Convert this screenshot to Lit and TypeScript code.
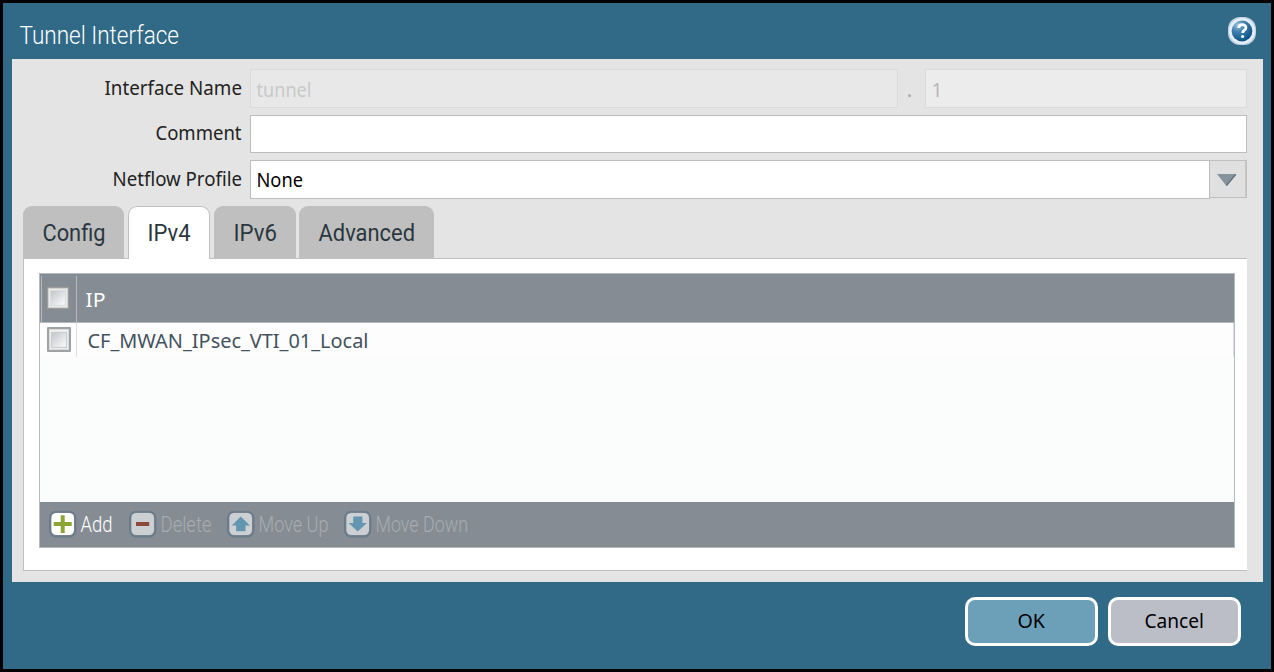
import { LitElement, html, css, svg } from "lit";
import { customElement, property } from "lit/decorators.js";

/** A single line of text fitted to a fixed measure. */
@customElement("fit-text")
class FitText extends LitElement {
  @property() text = "";
  @property({ type: Number }) width = 10;
  @property({ type: Number }) size = 20.5;
  static styles = css`
    :host { display: block; flex: none; height: 30px; }
    svg { display: block; overflow: visible; }
    text { fill: currentColor; }
  `;
  render() {
    return html`<svg width=${this.width} height="30">
      <text x="-0.5" y="22" font-size=${this.size} textLength=${this.width} lengthAdjust="spacingAndGlyphs">${this.text}</text>
    </svg>`;
  }
}

const t = (text: string, width: number, size = 20.8) =>
  html`<fit-text .text=${text} .width=${width} .size=${size}></fit-text>`;

const glyphs: Record<string, unknown> = {
  add: svg`<path d="M11.7 4.2h4v6.9h7v3.9h-7v6.9h-4V15h-7v-3.9h7z" fill="#8ea534"/>`,
  delete: svg`<path d="M7 11h13.2v4H7z" fill="#8a4a3b"/>`,
  up: svg`<path d="M13.7 5.6l9.2 8.8h-4.4v5.9h-9.4v-5.9H4.7z" fill="#6396b0"/>`,
  down: svg`<path d="M13.7 20.4L4.7 12h4.5V5.6h9.2V12h4.5z" fill="#6396b0"/>`,
};

const tool = (kind: string, label: string, width: number) => html`
  <div class="tool ${kind}">
    <svg width="28" height="27" viewBox="0 0 28 27">
      <rect x="1" y="0.6" width="25.4" height="25" rx="6.5" fill="none" stroke="#64798a" stroke-width="2" opacity=".85"/>
      <rect x="2.4" y="1.9" width="22.6" height="22.2" rx="5" fill=${kind === "add" ? "#ffffff" : "#cdd0d3"}/>
      ${glyphs[kind]}
    </svg>
    ${t(label, width, 22)}
  </div>`;

@customElement("app-root")
class AppRoot extends LitElement {
  static styles = css`
    :host { display: block; }
    * { box-sizing: border-box; }
    .dialog {
      width: 1274px; height: 672px; border: 3px solid #000; background: #306a87;
      display: flex; flex-direction: column;
      font-family: "Noto Sans", "Open Sans", sans-serif; color: #222;
    }
    .title {
      height: 56px; flex: none; display: flex; justify-content: space-between;
      padding: 14px 15px 0 17px; color: #fff;
      font-family: Roboto, sans-serif; font-weight: 300;
    }
    .title fit-text { margin-top: 5px; }
    .body {
      height: 523px; flex: none; margin: 0 8px 0 9px; background: #e4e4e4;
      padding: 10px 16px 0 11px; display: flex; flex-direction: column;
    }
    .row { display: flex; }
    .label { width: 227px; display: flex; justify-content: flex-end; padding: 4px 8px 0 0; }
    .input { border: 1px solid #bdbdbd; background: #fff; flex: 1; padding: 5px 0 0 6px; color: #000; }
    .name { height: 39px; margin-bottom: 7px; }
    .comment { height: 38px; margin-bottom: 7px; }
    .comment .label { padding-top: 3px; }
    .profile { height: 39px; margin-bottom: 7px; }
    .profile .input { padding-top: 4px; }
    .name .input { border-color: #dadada; background: #e8e8e8; color: #c8c8c8; flex: none; width: 648px; }
    .name .input.unit { width: 322px; background: #ececec; color: #b8b8b8; }
    .dot { width: 27px; padding: 6px 0 0 9px; color: #aaa; }
    .trigger {
      width: 37px; height: 38px; border: 1px solid #bfbfbf; border-left: 0;
      background: #e0e0e0; box-shadow: inset -1px 0 #c8c8c8; padding: 13px 0 0 7px;
    }
    .trigger svg { display: block; }
    .tabs {
      display: flex; height: 53px; flex: none; position: relative; z-index: 1;
      font-family: Roboto, sans-serif; color: #2b373e;
    }
    .tab {
      height: 52px; background: #bfbfbf; border-radius: 9px 9px 0 0;
      padding: 13px 0 0 19.5px; margin-right: 4px; width: 82px;
    }
    .tab.config { width: 101px; }
    .tab.on { height: 53px; background: #fff; border: 1px solid #bfbfbf; border-bottom: 0; padding: 12px 0 0 18.5px; }
    .tab.v6 { margin-right: 3px; }
    .tab.adv { width: 135px; }
    .panel {
      height: 313px; flex: none; margin-top: -1px; background: #fff;
      border: 1px solid #bfbfbf; border-right: 0; padding: 14px 12px 0 15px;
    }
    .grid {
      height: 275px; border: 1px solid #b5bac1; background: #fbfdfc;
      display: flex; flex-direction: column;
    }
    .head {
      height: 49px; flex: none; background: #858c93; border-bottom: 1px solid #b5bac1;
      display: flex; color: #fff; padding: 2px 0 0 1px;
    }
    .head .cell { width: 36px; border: solid #b5bac1; border-width: 0 1px; padding: 11px 0 0 5px; }
    .head fit-text { margin: 9px 0 0 9px; }
    .line { height: 34px; flex: none; background: #fdfdfd; display: flex; color: #44525e; border-right: 1px solid #dcdddf; }
    .line .cell { width: 37px; border-right: 1px solid #dfdfdf; padding: 4px 0 0 7px; }
    .line fit-text { margin: 3px 0 0 11px; }
    .box {
      width: 22px; height: 22px; border: 1px solid #a09d98; border-radius: 1px; background: #f1f1f1;
      box-shadow: inset 0 0 0 1px #d0d0ce; display: grid; place-items: center;
    }
    .box::before {
      content: ""; width: 14px; height: 14px;
      background: linear-gradient(135deg, #c2c7ce, #f2f2f2 85%);
      box-shadow: 0 0 1px 1px #dadbdc;
    }
    .line .box { width: 24px; height: 25px; border: 2px solid #a0a1a2; box-shadow: inset 0 0 0 1px #dcdcdc; }
    .line .box::before { box-shadow: 0 0 1px 1px #cbcdd0; }
    .toolbar {
      height: 45px; flex: none; margin-top: auto; background: #858c93; display: flex;
      padding: 9px 0 0 8.5px; color: #a6acb2; font-family: Roboto, sans-serif; font-weight: 300;
    }
    .tool { display: flex; }
    .tool fit-text { margin: -1px 0 0 4px; }
    .tool.add { width: 80px; color: #fff; }
    .tool.delete { width: 98px; }
    .tool.up { width: 117px; }
    .footer { display: flex; justify-content: flex-end; gap: 10px; padding: 15px 30px 0 0; color: #000; }
    .button {
      width: 133px; height: 49px; border: 3px solid #fff; border-radius: 10px;
      background: #bbbec7; display: flex; justify-content: center; padding-top: 6px;
    }
    .ok { background: #6ba0b8; }
  `;

  render() {
    return html`<div class="dialog">
      <div class="title">
        ${t("Tunnel Interface", 159.5, 26.3)}
        <svg width="28" height="28" viewBox="0 0 28 28">
          <defs><radialGradient id="orb" cx=".3" cy=".22" r=".85">
            <stop offset="0" stop-color="#9fc3dc"/><stop offset=".4" stop-color="#3d7fae"/><stop offset="1" stop-color="#075083"/>
          </radialGradient></defs>
          <rect x="0" y="0" width="28" height="28" rx="12" fill="#bfd2e4"/>
          <circle cx="14" cy="14" r="13" fill="#e6eef7"/>
          <circle cx="14" cy="14" r="10.4" fill="url(#orb)"/>
          <path d="M10.7 10.8c.3-4.3 7.3-4.1 7.2-.1 0 2.6-3.2 2.4-3.2 5.2" fill="none" stroke="#fff" stroke-width="2.8"/>
          <circle cx="14.6" cy="19.5" r="1.6" fill="#fff"/>
        </svg>
      </div>
      <div class="body">
        <div class="row name">
          <div class="label">${t("Interface Name", 137.5)}</div>
          <div class="input">${t("tunnel", 55)}</div>
          <div class="dot">${t(".", 6)}</div>
          <div class="input unit">${t("1", 11)}</div>
        </div>
        <div class="row comment">
          <div class="label">${t("Comment", 86)}</div>
          <div class="input"></div>
        </div>
        <div class="row profile">
          <div class="label">${t("Netflow Profile", 129.5)}</div>
          <div class="input">${t("None", 46.5)}</div>
          <div class="trigger">
            <svg width="20" height="13"><path d="M0 0h19.5L9.5 12z" fill="#84939c"/><path d="M18.7.5L9.5 11.5" stroke="#60717c" stroke-width="1.2"/></svg>
          </div>
        </div>
        <div class="tabs">
          <div class="tab config">${t("Config", 63, 24.5)}</div>
          <div class="tab on">${t("IPv4", 43, 24.5)}</div>
          <div class="tab v6">${t("IPv6", 43.5, 24.5)}</div>
          <div class="tab adv">${t("Advanced", 96.5, 24.5)}</div>
        </div>
        <div class="panel">
          <div class="grid">
            <div class="head"><div class="cell"><div class="box"></div></div>${t("IP", 20)}</div>
            <div class="line"><div class="cell"><div class="box"></div></div>${t("CF_MWAN_IPsec_VTI_01_Local", 281)}</div>
            <div class="toolbar">
              ${tool("add", "Add", 32)} ${tool("delete", "Delete", 51)}
              ${tool("up", "Move Up", 70)} ${tool("down", "Move Down", 92.5)}
            </div>
          </div>
        </div>
      </div>
      <div class="footer">
        <div class="button ok">${t("OK", 27.5)}</div>
        <div class="button">${t("Cancel", 59.5)}</div>
      </div>
    </div>`;
  }
}
